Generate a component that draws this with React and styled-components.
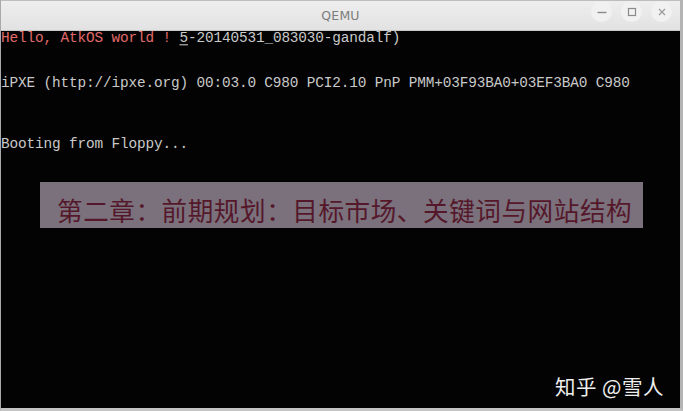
import React from "react";
import styled, { createGlobalStyle } from "styled-components";

const Global = createGlobalStyle`
  html, body { margin: 0; padding: 0; background: #d6d6d6; overflow: hidden; }
  #root { width: 683px; height: 411px; }
`;

const Window = styled.div`
  width: 683px;
  height: 411px;
  box-sizing: border-box;
  display: flex;
  flex-direction: column;
  background: #cfcfcf;
  border-left: 1px solid #a9a9a9;
  border-right: 3px solid #b4b4b4;
  border-bottom: 3px solid #c4c4c4;
`;

const TitleBar = styled.div`
  height: 31px;
  flex: none;
  position: relative;
  display: flex;
  align-items: center;
  justify-content: center;
  background: linear-gradient(#eeeeee, #e2e2e2);
  border-top: 1px solid #bdbdbd;
  border-bottom: 1px solid #c8c8c8;
  box-sizing: border-box;
`;

const Title = styled.span`
  font-family: "DejaVu Sans", "Liberation Sans", sans-serif;
  font-size: 12.5px;
  color: #7c7c7c;
  letter-spacing: 0.2px;
`;

const Controls = styled.div`
  position: absolute;
  right: 8px;
  top: 0;
  height: 100%;
  display: flex;
  align-items: center;
  gap: 9px;
  padding-bottom: 8px;
  box-sizing: border-box;
`;

const CtrlBtn = styled.div`
  width: 21px;
  height: 21px;
  border-radius: 50%;
  background: #f1f1f1;
  display: flex;
  align-items: center;
  justify-content: center;
`;

const Screen = styled.div`
  flex: 1;
  position: relative;
  background: #030303;
  padding: 0;
  font-family: "Liberation Mono", "DejaVu Sans Mono", monospace;
  font-size: 14.4px;
  letter-spacing: -0.14px;
  line-height: 15.1px;
  color: #c9c9c9;
  overflow: hidden;
`;

const Line = styled.div`
  height: 15.1px;
  white-space: pre;
  transform: scaleY(1.05);
`;

const Red = styled.span`
  color: #e06a6a;
`;

const Cursor = styled.span`
  text-decoration: underline;
  text-underline-offset: 2px;
`;

const Banner = styled.div`
  position: absolute;
  left: 39px;
  top: 151px;
  width: 603px;
  height: 46px;
  background: #7a717d;
  display: flex;
  align-items: flex-end;
  padding: 0 0 1px 17px;
  box-sizing: border-box;
`;

const BannerText = styled.span`
  font-family: "Noto Sans CJK SC", sans-serif;
  font-size: 25.6px;
  line-height: 34px;
  letter-spacing: 0.55px;
  color: #55182a;
`;

const Watermark = styled.div`
  position: absolute;
  right: 16px;
  bottom: 14px;
  font-family: "Noto Sans CJK SC", sans-serif;
  font-size: 20.5px;
  color: #efefef;
  letter-spacing: 0.5px;
`;

const Minimize = () => (
  <svg width="12" height="12" viewBox="0 0 12 12">
    <path d="M1.5 6.5h9" stroke="#8a8a8a" strokeWidth="1.4" />
  </svg>
);
const Maximize = () => (
  <svg width="12" height="12" viewBox="0 0 12 12">
    <rect x="2.5" y="2.5" width="7" height="7" fill="none" stroke="#8a8a8a" strokeWidth="1.2" />
  </svg>
);
const Close = () => (
  <svg width="12" height="12" viewBox="0 0 12 12">
    <path d="M3 3l6 6M9 3l-6 6" stroke="#9a9a9a" strokeWidth="1.2" />
  </svg>
);

export default function App() {
  return (
    <>
      <Global />
      <Window>
        <TitleBar>
          <Title>QEMU</Title>
          <Controls>
            <CtrlBtn><Minimize /></CtrlBtn>
            <CtrlBtn><Maximize /></CtrlBtn>
            <CtrlBtn><Close /></CtrlBtn>
          </Controls>
        </TitleBar>
        <Screen>
          <Line>
            <Red>Hello, AtkOS world ! </Red>
            <Cursor>5</Cursor>-20140531_083030-gandalf)
          </Line>
          <Line> </Line>
          <Line> </Line>
          <Line>iPXE (http://ipxe.org) 00:03.0 C980 PCI2.10 PnP PMM+03F93BA0+03EF3BA0 C980</Line>
          <Line> </Line>
          <Line> </Line>
          <Line> </Line>
          <Line>Booting from Floppy...</Line>
          <Banner>
            <BannerText>第二章：前期规划：目标市场、关键词与网站结构</BannerText>
          </Banner>
          <Watermark>知乎 @雪人</Watermark>
        </Screen>
      </Window>
    </>
  );
}
